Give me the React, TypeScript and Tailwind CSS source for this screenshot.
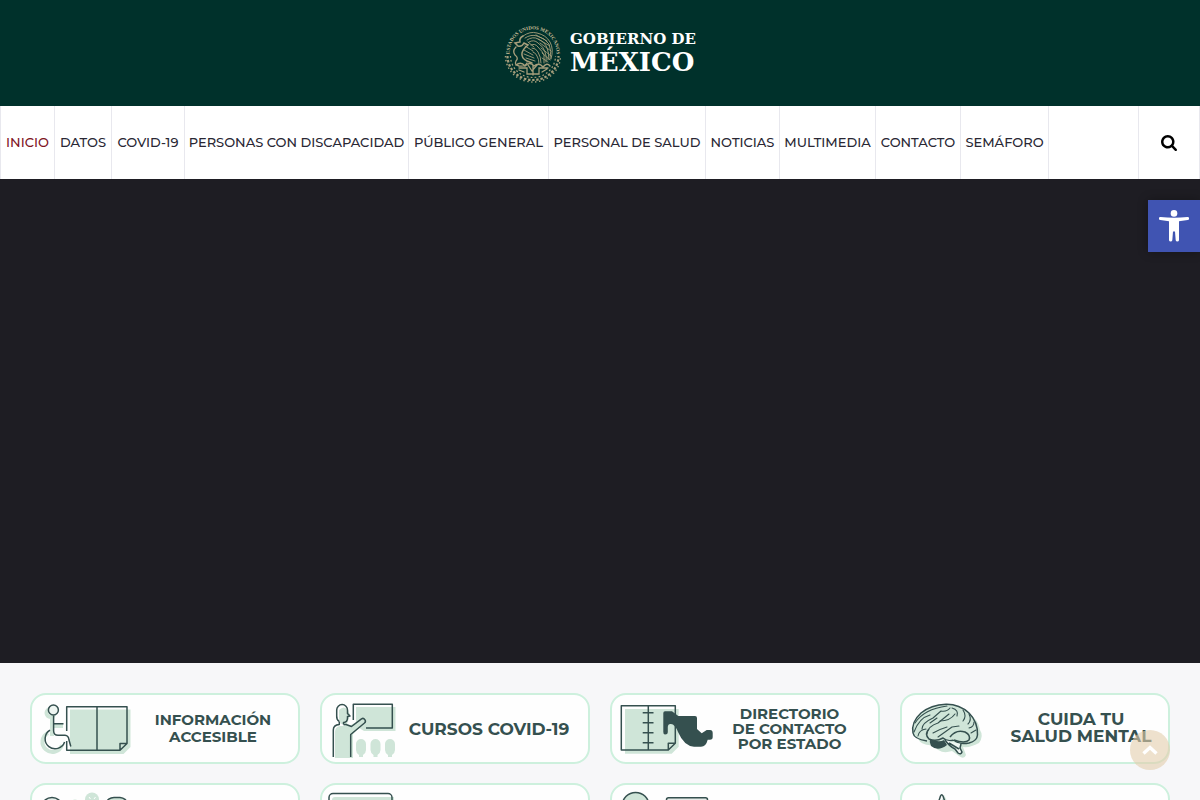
import type { ReactNode } from "react";

const INK = "#35504f";
const MINT = "#cfe5d8";

const navItems = [
  "INICIO",
  "DATOS",
  "COVID-19",
  "PERSONAS CON DISCAPACIDAD",
  "PÚBLICO GENERAL",
  "PERSONAL DE SALUD",
  "NOTICIAS",
  "MULTIMEDIA",
  "CONTACTO",
  "SEMÁFORO",
];

function Seal() {
  return (
    <svg viewBox="0 0 58 58" className="size-[58px] shrink-0 overflow-visible" aria-hidden="true">
      <defs>
        <path id="seal-arc" d="M6.2 34 A23.4 23.4 0 1 1 51.8 34" />
      </defs>
      <text fill="#cbbf98" fontSize="5" fontWeight="700" fontFamily="'Liberation Serif', serif">
        <textPath href="#seal-arc" startOffset="50%" textAnchor="middle">
          ESTADOS UNIDOS MEXICANOS
        </textPath>
      </text>
      <g fill="none" stroke="#a79f7c">
        <path d="M3.5 32 A25.5 24 0 0 0 54.5 32" strokeWidth="2.2" strokeDasharray="2.4 1.8" />
        <path d="M1.5 32 A27.5 26 0 0 0 56.5 32" strokeWidth="1.4" strokeDasharray="1.4 2.6" />
        <path d="M6.5 32 A22.5 21.5 0 0 0 51.5 32" strokeWidth="1.2" strokeDasharray="1.8 2.2" />
      </g>
      <g fill="none" stroke="#a79f7c" strokeWidth="0.9" strokeLinecap="round">
        <path d="M19 12 q7 -5 14 -3 q9 2 13 9 q4 7 1 17" />
        <path d="M21 14 q6 -4 12 -2 q8 2 12 8 q3 7 1 15" />
        <path d="M23 16 q6 -4 11 -1 q7 3 9 9 q3 6 1 12" />
        <path d="M25 18 q5 -3 9 1 q6 4 7 9 q2 4 1 10" />
        <path d="M27 21 q4 -2 7 2 q5 5 6 8 l0 8" />
        <path d="M28 24 q4 0 6 4 q3 5 3 11" />
        <path d="M29 28 q3 1 4 4 q2 3 2 8" />
        <path d="M19 12 q-4 2 -3 6 l-5 1 l3 3 q4 1 6 -3 l4 2 q-5 4 -6 8 q-1 5 5 8 l5 2" strokeWidth="1.5" />
        <path d="M12 23 q-4 4 -1 8 q4 3 1 6 q-2 4 3 5 q6 1 8 -3" strokeWidth="1.3" />
        <path d="M21 22 l8 5 M20 26 l9 5 M20 30 l10 4 M24 18 l6 5 M22 34 l9 3" />
        <path d="M32 11 l11 6 M34 15 l12 7 M36 19 l11 8 M37 24 l10 8 M38 29 l8 7 M38 34 l6 4" strokeDasharray="1.6 0.8" />
        <path d="M12 41 q5 -4 9 1 q5 -5 9 0 q5 -4 9 1 q4 -5 7 -1" strokeWidth="1.5" />
        <path d="M15 44 h8 v6 h12 v-6 h9 M24 41 l4 6 l5 -6 M29 42 v9 M20 48 l-5 -2 M38 48 l5 -3" strokeWidth="1.3" />
      </g>
    </svg>
  );
}

function Drawing({ children, className }: { children: ReactNode; className: string }) {
  return (
    <svg
      className={`h-[66px] shrink-0 ${className}`}
      fill="none"
      stroke={INK}
      strokeWidth="1.5"
      strokeLinejoin="round"
      aria-hidden="true"
    >
      {children}
    </svg>
  );
}

function AccessibleInfoIcon() {
  return (
    <Drawing className="w-[108px]">
      <g stroke={MINT} strokeWidth="4">
        <circle cx="18.5" cy="17" r="4" />
        <path d="M20 20 V40 M22 30 H31 M16 37 A10 10 0 1 0 30 49" />
      </g>
      <path d="M38 13.5 H98.5 V51 L91.5 58 H38 Z" fill={MINT} stroke="none" />
      <path d="M34.7 35 V10.7 H95 V47.5 L88 54.3 H34.7 V45 M65 10.7 V54.3 M88 54.3 V47.5 H95" />
      <circle cx="21.4" cy="14" r="5" fill="#eff6f2" />
      <path d="M21.6 19.5 V35 Q21.8 39.3 26 39.3 H33 Q36.5 39.5 37 44 L38.8 50.5 M21.6 27.8 H31.5" />
      <path d="M18 34.2 A10 10 0 1 0 32.6 46" />
    </Drawing>
  );
}

function CoursesIcon() {
  return (
    <Drawing className="w-[80px]">
      <path d="M34 11 H73.5 V35 H42 L34 30 Z" fill={MINT} stroke="none" />
      <path d="M13 36 Q13 31 18 30 H27 L40 23 L44 25 L31 38 V62 H13 Z" fill={MINT} stroke="none" />
      <path d="M17 14 Q22 9 26 14 L28 19 L25 28 H19 L17 23 Z" fill={MINT} stroke="none" />
      <path d="M31.3 24 V8.3 H70.3 V32 H44" />
      <path d="M17.3 25.5 A6 6 0 0 1 14.7 20 V14 A5.4 5.4 0 0 1 25.5 14 V17.5 L28 20 L25.5 20.5 V22 A4.5 4.5 0 0 1 21.5 26.5 V28.5" />
      <path d="M17.3 25.5 V28.5 Q11.3 29 11.3 34 V61" />
      <path d="M21.5 28.5 H24 L29.5 30.5 L39.5 22.8 A2.6 2.6 0 0 1 42.5 27 L28.7 38.5 V61" fill={MINT} />
      <g fill={MINT} stroke="none">
        <path d="M34 48 a5 5 0 0 1 10 0 v6 q0 3 -3 5 v2 h-4 v-2 q-3 -2 -3 -5 Z" />
        <path d="M48.5 48 a5 5 0 0 1 10 0 v6 q0 3 -3 5 v2 h-4 v-2 q-3 -2 -3 -5 Z" />
        <path d="M63 48 a5 5 0 0 1 10 0 v6 q0 3 -3 5 v2 h-4 v-2 q-3 -2 -3 -5 Z" />
      </g>
    </Drawing>
  );
}

function DirectoryIcon() {
  return (
    <Drawing className="w-[105px]">
      <path d="M13 13 H66.7 V50.7 L59.7 57.7 H13 Z" fill={MINT} stroke="none" />
      <path d="M9.3 9.7 H63.3 V47.3 L56.3 54 H9.3 Z M36.3 9.7 V54 M56.3 54 V47.3 H63.3" />
      <path d="M30.7 16.7 H41.5 M30.7 26.7 H41.5 M30.7 36.7 H41.5 M30.7 46.7 H41.5" />
      <path
        d="M51.3 17 Q51.3 15.3 53 15.3 H60 L66.3 20 H83 Q85 20 85 22 V33 L89.7 37.3 L94.7 34 H98 Q100.7 34 100.7 37 V41 Q100.7 43.7 98 43.7 H95.7 Q94 50.7 89 50.7 H82 Q72 50 66 36 Q63 28.3 59 28 Q56 27.5 55.8 31 V36 Q55.8 38.5 53 38.5 Q51.3 38.5 51.3 36 Z"
        fill={INK}
        stroke="none"
      />
    </Drawing>
  );
}

function BrainIcon() {
  return (
    <Drawing className="w-[92px]">
      <path
        d="M16 43 Q13 30 26 17 Q45 7 65 16 Q77 24 78 34 Q82 40 77 47 Q68 52 61 51 L64 59 Q62 64 57 60 L50 55 Q38 59 31 49 Q20 50 16 43 Z"
        fill={MINT}
        stroke="none"
      />
      <path
        d="M25 45 Q12 43 11 37 Q9 26 19 17 Q29 9 44 8.3 Q57 8 67 17 Q76 26 75.5 39 Q75 45 67 47 Q57 49 52 44 Q45 46 41 42 Q34 46 27 43 Q22 38 27 33"
        fill={MINT}
      />
      <path d="M28 43 Q37 47 42 44 L45 49 Q36 56 29 50 Q27 46 28 43 Z" fill={INK} stroke="none" />
      <path d="M43 44 Q47 50 53 53 L56 57 Q59 59 60 56 L58 52 L59 48 M47 47 L57 53" fill="#eff6f2" />
      <path d="M48 41 Q54 33 63 36 Q69 39 67 44 Q63 48 52 44" fill={MINT} />
      <g strokeWidth="1.1" strokeLinecap="round">
        <path d="M13 27 Q22 13 45 10 M12 36 Q17 22 28 19 M20 33 Q20 27 31 22 L39 15 Q45 16 48 12" />
        <path d="M25 38 Q26 30 36 27 L47 18 M31 37 Q38 33 45 31 M36 41 L50 31 L57 30" />
        <path d="M38 25 Q48 25 53 18 M50 12 Q57 14 55 20 M61 14 Q65 20 61 25 M67 18 Q70 24 66 28 M72 26 Q72 31 67 32 M74 34 L69 37" />
        <path d="M16 40 Q17 34 24 33 M28 27 L35 22" />
      </g>
    </Drawing>
  );
}

function PeopleIcon() {
  return (
    <Drawing className="w-[108px]">
      <circle cx="60" cy="13.5" r="7" fill={MINT} stroke="none" />
      <path d="M57 11 l1.5 2 M62 13 l1.5 -2 M57 16.5 h6" stroke="#fff" strokeWidth="1" />
      <circle cx="43" cy="20" r="6.5" fill={MINT} stroke="none" />
      <path d="M9 21 Q12 11.5 20 11.5 Q28 11.5 31 21 V40 H9 Z" fill="#e6efea" />
      <path d="M73 18 Q76 11.5 82 11.5 H88 Q94 12 96 18 V40 H73 Z" fill={MINT} />
    </Drawing>
  );
}

function ScreenIcon() {
  return (
    <Drawing className="w-[80px]">
      <path d="M10 14 Q10 11 13 11 H72 V56 H10 Z" fill={MINT} stroke="none" />
      <rect x="7" y="7.5" width="63" height="44" rx="4" />
      <path d="M21 16 L23 14 H28 L30 16 V20 H21 Z" fill={INK} stroke="none" />
    </Drawing>
  );
}

function AdviceIcon() {
  return (
    <Drawing className="w-[105px]">
      <circle cx="23.6" cy="19.8" r="13.4" fill={MINT} />
      <rect x="54.5" y="11.8" width="41" height="36" rx="2" fill="#e6ebe8" />
    </Drawing>
  );
}

function PeakIcon() {
  return (
    <Drawing className="w-[92px]">
      <path d="M42 9 L47 19 H38 Z" fill={MINT} stroke="none" />
      <path d="M30 36 L38.5 10 Q39.7 7.5 41 10 L50 36" />
    </Drawing>
  );
}

type Card = { icon: ReactNode; lines: string[]; style: string; label?: string };

const cards: Card[] = [
  { icon: <AccessibleInfoIcon />, lines: ["INFORMACIÓN", "ACCESIBLE"], style: "pr-3 pb-0.5 text-[15px] leading-[17px]" },
  { icon: <CoursesIcon />, lines: ["CURSOS COVID-19"], style: "pr-3 pt-0.5 text-[17px] leading-[17px]" },
  { icon: <DirectoryIcon />, lines: ["DIRECTORIO", "DE CONTACTO", "POR ESTADO"], style: "pr-4 text-[15px] leading-[15px]" },
  { icon: <BrainIcon />, lines: ["CUIDA TU", "SALUD MENTAL"], style: "pb-0.5 text-[17px] leading-[17px]" },
  { icon: <PeopleIcon />, lines: [], style: "", label: "Comunidad" },
  { icon: <ScreenIcon />, lines: [], style: "", label: "Pantalla" },
  { icon: <AdviceIcon />, lines: [], style: "", label: "Orientación" },
  { icon: <PeakIcon />, lines: [], style: "", label: "Avisos" },
];

export default function App() {
  return (
    <div className="min-h-screen bg-[#f7f7f9] font-['Montserrat','Inter',sans-serif]">
      <header className="flex h-[106px] items-center justify-center bg-[#00312b]">
        <a href="#inicio" className="flex items-center gap-2 text-white">
          <Seal />
          <span className="flex flex-col pt-0.5 font-['DejaVu_Serif',serif] font-bold">
            <span className="text-[15px] leading-4">GOBIERNO DE</span>
            <span className="text-[26px] leading-[30px]">MÉXICO</span>
          </span>
        </a>
      </header>

      <nav className="flex h-[73px] justify-between border-x border-[#e8e8ee] bg-white" aria-label="Principal">
        <ul className="grid grid-cols-[54px_57px_73px_224px_140px_157px_74px_96px_85px_88px] text-[13px] font-medium">
          {navItems.map((item, i) => (
            <li key={item} className="border-r border-[#e8e8ee]">
              <a
                href={`#${item.toLowerCase()}`}
                className={`flex h-full items-center justify-center whitespace-nowrap ${
                  i === 0 ? "text-[#80151f]" : "text-[#292734]"
                }`}
              >
                {item}
              </a>
            </li>
          ))}
        </ul>
        <button
          type="button"
          aria-label="Buscar"
          className="flex w-[61px] items-center justify-center border-l border-[#e8e8ee] text-black"
        >
          <svg viewBox="0 128 1664 1664" className="size-4" fill="currentColor" aria-hidden="true">
            <path d="M1152 832q0-185-131.5-316.5T704 384 387.5 515.5 256 832t131.5 316.5T704 1280t316.5-131.5T1152 832zm512 832q0 52-38 90t-90 38q-54 0-90-38l-343-342q-179 124-399 124-143 0-273.5-55.5t-225-150-150-225T0 832t55.5-273.5 150-225 225-150T704 128t273.5 55.5 225 150 150 225T1408 832q0 220-124 399l343 343q37 37 37 90z" />
          </svg>
        </button>
      </nav>

      <main>
        <section className="h-[484px] bg-[#1e1d23]" aria-label="Presentación" />
        <section className="grid grid-cols-4 gap-x-5 gap-y-[19px] p-[30px]">
          {cards.map((card, i) => (
            <a
              key={i}
              href={`#tema-${i + 1}`}
              aria-label={card.label}
              className="flex h-[71px] items-center overflow-hidden rounded-2xl border-2 border-[#cdf0dd] bg-[#fefefe]"
            >
              {card.icon}
              <span className={`flex flex-1 flex-col text-center font-bold whitespace-nowrap text-[#35504f] ${card.style}`}>
                {card.lines.map((line) => (
                  <span key={line}>{line}</span>
                ))}
              </span>
            </a>
          ))}
        </section>
      </main>

      <button
        type="button"
        aria-label="Herramientas de accesibilidad"
        className="fixed top-[200px] right-0 flex size-[52px] items-center justify-center bg-[#4054b2] text-white shadow-[0_0_10px_rgba(0,0,0,0.3)]"
      >
        <svg viewBox="0 0 30 32" className="h-8 w-[30px]" fill="currentColor" aria-hidden="true">
          <circle cx="15" cy="3.4" r="3.3" />
          <path d="M1.5 7 Q15 8.4 28.5 7 A1.5 1.5 0 0 1 28.7 10 L20 11.2 V30.2 A1.7 1.7 0 0 1 16.7 30.2 L16 21.5 H14 L13.3 30.2 A1.7 1.7 0 0 1 10 30.2 V11.2 L1.3 10 A1.5 1.5 0 0 1 1.5 7 Z" />
        </svg>
      </button>

      <button
        type="button"
        aria-label="Volver arriba"
        className="fixed right-[30px] bottom-[30px] flex size-10 items-center justify-center rounded-full bg-[#e3cdac]/60 text-white"
      >
        <svg viewBox="0 0 16 10" className="h-[10px] w-4" fill="none" stroke="currentColor" strokeWidth="3.4" aria-hidden="true">
          <path d="M1.5 8.5 L8 2.5 L14.5 8.5" />
        </svg>
      </button>
    </div>
  );
}
